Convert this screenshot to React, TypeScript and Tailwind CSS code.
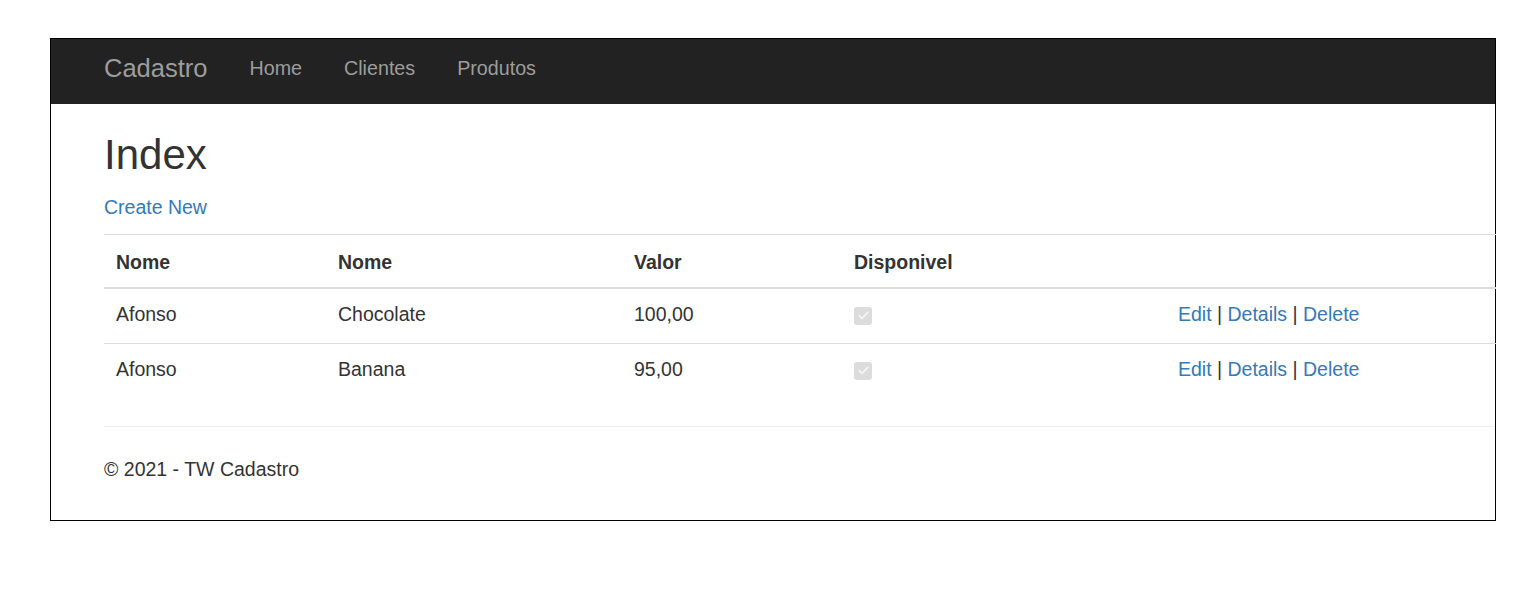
const font = { fontFamily: '"Liberation Sans", Arial, sans-serif' };

const produtos = [
  { cliente: "Afonso", nome: "Chocolate", valor: "100,00", disponivel: true },
  { cliente: "Afonso", nome: "Banana", valor: "95,00", disponivel: true },
];

function DisabledCheck() {
  return (
    <span className="inline-flex h-[18px] w-[18px] items-center justify-center rounded-[3px] bg-[#dcdcdc] align-middle">
      <svg viewBox="0 0 16 16" className="h-[13px] w-[13px]" fill="none">
        <path
          d="M3 8.5l3 3 7-7"
          stroke="#f4f4f4"
          strokeWidth="2.4"
          strokeLinecap="round"
          strokeLinejoin="round"
        />
      </svg>
    </span>
  );
}

export default function App() {
  return (
    <div className="min-h-[602px] bg-white pt-[38px] pl-[50px]" style={font}>
      <div className="w-[1446px] border border-black text-[19.5px] leading-[28px] text-[#333]">
        {/* navbar */}
        <nav className="flex h-[65px] items-center bg-[#222] pb-[8px] pl-[53px] text-[19.7px]">
          <a href="#" className="pr-[21px] text-[25.5px] text-[#9d9d9d]">
            Cadastro
          </a>
          <a href="#" className="px-[21px] text-[#9d9d9d]">
            Home
          </a>
          <a href="#" className="px-[21px] text-[#9d9d9d]">
            Clientes
          </a>
          <a href="#" className="px-[21px] text-[#9d9d9d]">
            Produtos
          </a>
        </nav>

        <div className="pl-[53px]">
          <h2 className="mt-[28px] text-[42px] leading-[46px]">Index</h2>
          <p className="mt-[15px] mb-[13px]">
            <a href="#" className="text-[#337ab7]">
              Create New
            </a>
          </p>

          <table className="w-[1392px] table-fixed border-collapse text-left">
            <colgroup>
              <col className="w-[222px]" />
              <col className="w-[296px]" />
              <col className="w-[220px]" />
              <col className="w-[324px]" />
              <col />
            </colgroup>
            <thead>
              <tr className="border-t border-b-2 border-[#ddd]">
                <th className="px-[12px] pt-[13px] pb-[11px] font-bold">Nome</th>
                <th className="px-[12px] pt-[13px] pb-[11px] font-bold">Nome</th>
                <th className="px-[12px] pt-[13px] pb-[11px] font-bold">Valor</th>
                <th className="px-[12px] pt-[13px] pb-[11px] font-bold">Disponivel</th>
                <th className="px-[12px] pt-[13px] pb-[11px]"></th>
              </tr>
            </thead>
            <tbody>
              {produtos.map((p, i) => (
                <tr
                  key={i}
                  className={i < produtos.length - 1 ? "border-b border-[#ddd]" : ""}
                >
                  <td className="px-[12px] pt-[11px] pb-[15px]">{p.cliente}</td>
                  <td className="px-[12px] pt-[11px] pb-[15px]">{p.nome}</td>
                  <td className="px-[12px] pt-[11px] pb-[15px]">{p.valor}</td>
                  <td className="px-[12px] pt-[11px] pb-[15px]">
                    {p.disponivel && <DisabledCheck />}
                  </td>
                  <td className="px-[12px] pt-[11px] pb-[15px]">
                    <a href="#" className="text-[#337ab7]">Edit</a> |{" "}
                    <a href="#" className="text-[#337ab7]">Details</a> |{" "}
                    <a href="#" className="text-[#337ab7]">Delete</a>
                  </td>
                </tr>
              ))}
            </tbody>
          </table>

          <hr className="mt-[28px] border-t border-[#eee]" />
          <footer className="pt-[28px] pb-[37px]">
            <p>&copy; 2021 - TW Cadastro</p>
          </footer>
        </div>
      </div>
    </div>
  );
}
